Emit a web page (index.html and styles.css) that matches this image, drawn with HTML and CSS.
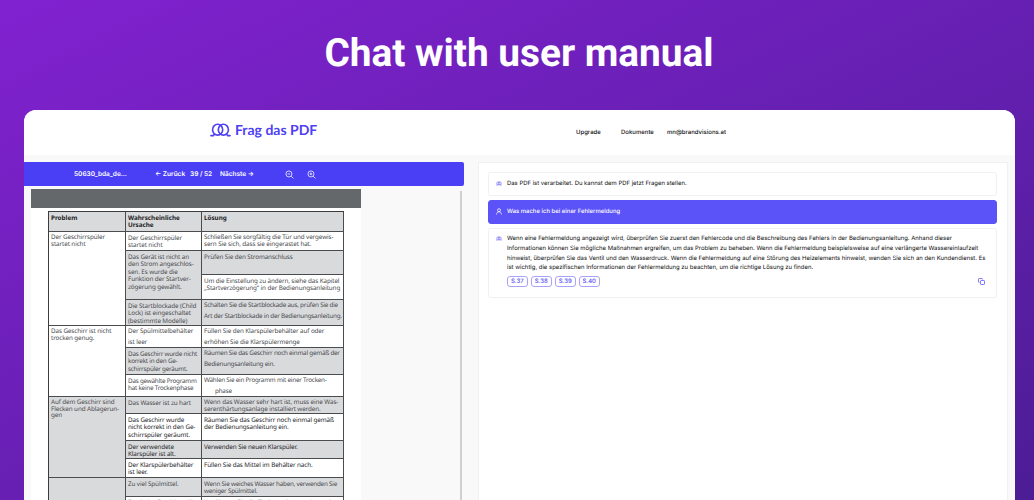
FILE: index.html
```html
<!DOCTYPE html>
<html lang="de">
<head>
    <meta charset="UTF-8">
    <meta name="viewport" content="width=device-width, initial-scale=1.0">
    <title>Frag das PDF</title>
    <link rel="stylesheet" href="styles.css">
</head>
<body>
    <h1>Chat with user manual</h1>

    <div class="window">
        <header class="header">
            <div class="logo">
                <svg class="logo-icon" viewBox="0 0 22 14" fill="none" stroke="currentColor" stroke-width="1.7" stroke-linecap="round">
                    <ellipse cx="8" cy="6.700" rx="5.300" ry="5.700"/>
                    <ellipse cx="14" cy="6.700" rx="5.300" ry="5.700"/>
                    <path d="M1 12.900h2.500l1.200-1.700M21 12.900h-2.500l-1.200-1.700"/>
                </svg>
                <span>Frag das PDF</span>
            </div>
            <nav class="nav">
                <a class="upgrade">Upgrade</a>
                <a class="documents">Dokumente</a>
                <a class="account">mn@brandvisions.at</a>
            </nav>
        </header>

        <main class="main">
            <section class="viewer">
                <div class="toolbar">
                    <span class="file-name">50630_bda_de...</span>
                    <span class="prev">← Zurück</span>
                    <span class="pages">39 / 52</span>
                    <span class="next">Nächste →</span>
                    <svg class="zoom-icon" viewBox="0 0 24 24"><circle cx="10.500" cy="10.500" r="8"/><path d="M16.500 16.500l6 6M7 10.500h7"/></svg>
                    <svg class="zoom-icon" viewBox="0 0 24 24"><circle cx="10.500" cy="10.500" r="8"/><path d="M16.500 16.500l6 6M7 10.500h7M10.500 7v7"/></svg>
                </div>
                <div class="viewer-body">
                    <div class="page">
                        <div class="page-bar"></div>
                        <div class="manual">
                            <div class="cell head">Problem</div>
                            <div class="cell head">Wahrscheinliche<br>Ursache</div>
                            <div class="cell head">Lösung</div>

                            <div class="cell tight rows-4">Der Geschirrspüler<br>startet nicht</div>
                            <div class="cell">Der Geschirrspüler<br>startet nicht</div>
                            <div class="cell tight">Schließen Sie sorgfältig die Tür und vergewis-<br>sern Sie sich, dass sie eingerastet hat.</div>
                            <div class="cell grey rows-2">Das Gerät ist nicht an<br>den Strom angeschlos-<br>sen. Es wurde die<br>Funktion der Startver-<br>zögerung gewählt.</div>
                            <div class="cell grey">Prüfen Sie den Stromanschluss</div>
                            <div class="cell">Um die Einstellung zu ändern, siehe das Kapitel<br>„Startverzögerung“ in der Bedienungsanleitung</div>
                            <div class="cell grey">Die Startblockade (Child<br>Lock) ist eingeschaltet<br>(bestimmte Modelle)</div>
                            <div class="cell grey loose narrow">Schalten Sie die Startblockade aus, prüfen Sie die<br>Art der Startblockade in der Bedienungsanleitung.</div>

                            <div class="cell tight rows-3">Das Geschirr ist nicht<br>trocken genug.</div>
                            <div class="cell loose">Der Spülmittelbehälter<br>ist leer</div>
                            <div class="cell loose">Füllen Sie den Klarspülerbehälter auf oder<br>erhöhen Sie die Klarspülermenge</div>
                            <div class="cell grey narrow">Das Geschirr wurde nicht<br>korrekt in den Ge-<br>schirrspüler geräumt.</div>
                            <div class="cell grey loose narrow">Räumen Sie das Geschirr noch einmal gemäß der<br>Bedienungsanleitung ein.</div>
                            <div class="cell narrow">Das gewählte Programm<br>hat keine Trockenphase</div>
                            <div class="cell loose narrow">Wählen Sie ein Programm mit einer Trocken-<br><span class="indent">phase</span></div>

                            <div class="cell grey tight rows-4">Auf dem Geschirr sind<br>Flecken und Ablagerun-<br>gen</div>
                            <div class="cell grey">Das Wasser ist zu hart</div>
                            <div class="cell grey tight">Wenn das Wasser sehr hart ist, muss eine Was-<br>serenthärtungsanlage installiert werden.</div>
                            <div class="cell dark">Das Geschirr wurde<br>nicht korrekt in den Ge-<br>schirrspüler geräumt.</div>
                            <div class="cell dark">Räumen Sie das Geschirr noch einmal gemäß<br>der Bedienungsanleitung ein.</div>
                            <div class="cell grey dark">Der verwendete<br>Klarspüler ist alt.</div>
                            <div class="cell grey dark">Verwenden Sie neuen Klarspüler.</div>
                            <div class="cell dark">Der Klarspülerbehälter<br>ist leer.</div>
                            <div class="cell dark">Füllen Sie das Mittel im Behälter nach.</div>

                            <div class="cell grey rows-2"></div>
                            <div class="cell grey">Zu viel Spülmittel.</div>
                            <div class="cell grey narrow">Wenn Sie weiches Wasser haben, verwenden Sie<br>weniger Spülmittel.</div>
                            <div class="cell last">Das beim Geschirrspüler</div>
                            <div class="cell last">Verdünnen Sie die Flecken mit etwas Lauge in</div>
                        </div>
                    </div>
                    <div class="scrollbar"></div>
                </div>
            </section>

            <section class="chat">
                <div class="message">
                    <svg class="bot-icon" viewBox="0 0 22 14"><ellipse cx="8" cy="6.700" rx="5.300" ry="5.700"/><ellipse cx="14" cy="6.700" rx="5.300" ry="5.700"/><path d="M1 12.900h4M21 12.900h-4"/></svg>
                    <p>Das PDF ist verarbeitet. Du kannst dem PDF jetzt Fragen stellen.</p>
                </div>
                <div class="message user">
                    <svg class="user-icon" viewBox="0 0 14 16"><circle cx="7" cy="5" r="3.500"/><path d="M1.500 15c0-3.500 2-6.500 5.500-6.500s5.500 3 5.500 6.500"/></svg>
                    <p>Was mache ich bei einer Fehlermeldung</p>
                </div>
                <div class="message answer">
                    <svg class="bot-icon" viewBox="0 0 22 14"><ellipse cx="8" cy="6.700" rx="5.300" ry="5.700"/><ellipse cx="14" cy="6.700" rx="5.300" ry="5.700"/><path d="M1 12.900h4M21 12.900h-4"/></svg>
                    <div class="answer-body">
                        <p>Wenn eine Fehlermeldung angezeigt wird, überprüfen Sie zuerst den Fehlercode und die Beschreibung des Fehlers in der Bedienungsanleitung. Anhand dieser<br>
                        Informationen können Sie mögliche Maßnahmen ergreifen, um das Problem zu beheben. Wenn die Fehlermeldung beispielsweise auf eine verlängerte Wassereinlaufzeit<br>
                        hinweist, überprüfen Sie das Ventil und den Wasserdruck. Wenn die Fehlermeldung auf eine Störung des Heizelements hinweist, wenden Sie sich an den Kundendienst. Es<br>
                        ist wichtig, die spezifischen Informationen der Fehlermeldung zu beachten, um die richtige Lösung zu finden.</p>
                        <div class="sources">
                            <a>S.37</a>
                            <a>S.38</a>
                            <a>S.39</a>
                            <a>S.40</a>
                            <svg class="copy-icon" viewBox="0 0 14 14"><rect x="5" y="5" width="8" height="8" rx="1.500"/><path d="M3 9H2.500A1.500 1.500 0 0 1 1 7.500v-5A1.500 1.500 0 0 1 2.500 1h5A1.500 1.500 0 0 1 9 2.500V3"/></svg>
                        </div>
                    </div>
                </div>
            </section>
        </main>
    </div>
</body>
</html>
```
FILE: styles.css
```css
* {
    box-sizing: border-box;
}

body {
    margin: 0;
    height: 500px;
    overflow: hidden;
    display: flex;
    flex-direction: column;
    background: linear-gradient(to bottom right, #8122d0, #4c1d95);
    font-family: Inter, sans-serif;
    text-rendering: geometricPrecision;
}

h1 {
    margin: 0;
    height: 110px;
    padding: 1px 0 0 4px;
    flex-shrink: 0;
    line-height: 106px;
    text-align: center;
    color: #fff;
    font-family: Roboto, sans-serif;
    font-size: 38.8px;
    font-weight: 700;
}

.window {
    flex: 1;
    min-height: 0;
    margin: 0 19px 0 24px;
    display: flex;
    flex-direction: column;
    background-color: #f9f9fa;
    border-radius: 12px 12px 0 0;
    overflow: hidden;
}

.header {
    height: 45px;
    flex-shrink: 0;
    display: flex;
    background-color: #fff;
}

.logo {
    width: 366px;
    height: 39px;
    padding-left: 186px;
    display: flex;
    align-items: center;
    gap: 4px;
    color: #4f3ff5;
    font-family: Lato, sans-serif;
    font-size: 14px;
    font-weight: 700;
    white-space: nowrap;
}

.logo-icon {
    width: 21px;
    height: 14px;
}

.nav {
    height: 44px;
    margin-left: 186px;
    display: flex;
    align-items: center;
    color: #111;
    font-size: 6px;
    font-weight: 500;
}

.upgrade {
    width: 45px;
}

.documents {
    width: 46px;
}

.main {
    flex: 1;
    min-height: 0;
    padding: 7px 7px 0 0;
    display: flex;
    gap: 14px;
}

.viewer {
    width: 440px;
    flex-shrink: 0;
}

.toolbar {
    height: 24px;
    padding-left: 50px;
    display: flex;
    align-items: center;
    background-color: #4b3ff6;
    border-radius: 0 2px 2px 0;
    color: #fff;
    font-size: 6.5px;
    font-weight: 600;
    white-space: nowrap;
}

.file-name {
    width: 81px;
}

.prev {
    width: 35px;
}

.pages {
    width: 30px;
}

.next {
    width: 65px;
}

.zoom-icon {
    width: 9px;
    height: 9px;
    margin-right: 13px;
    fill: none;
    stroke: #fff;
    stroke-width: 2;
}

.viewer-body {
    display: flex;
    justify-content: space-between;
    padding: 3px 2px 0 7px;
}

.page {
    width: 330px;
    height: 320px;
    background-color: #fff;
}

.page-bar {
    height: 19px;
    background-color: #65686b;
}

/* table of the manual, row heights follow the printed page */
.manual {
    width: 296px;
    margin: 3px 0 0 17px;
    display: grid;
    grid-template-columns: 77px 76px 142px;
    grid-template-rows: 20px 19px 24px 25px 26px 22px 27px 22px 17px 27px 18px 19px 19px 20px;
    border: solid #3b3c3e;
    border-width: 1px 0 0 1px;
}

.cell {
    padding: 1.6px 0 0 2px;
    border: solid #4b4c4e;
    border-width: 0 1px 1px 0;
    color: #4b4c50;
    font-family: "Noto Sans", sans-serif;
    font-size: 6.3px;
    line-height: 7.6px;
    letter-spacing: -0.1px;
    white-space: nowrap;
}

.head {
    background-color: #d9dadc;
    color: #1b1b1d;
    font-weight: 700;
    letter-spacing: 0;
}

.grey {
    background-color: #d9dadc;
}

.dark {
    color: #252629;
}

.tight {
    padding-top: 2.4px;
    line-height: 6.5px;
}

.loose {
    padding-top: 0;
    line-height: 10.7px;
}

.narrow {
    letter-spacing: -0.22px;
}

.last {
    padding-top: 1px;
    color: #a5a6a8;
}

.indent {
    padding-left: 11px;
}

.rows-2 {
    grid-row: span 2;
}

.rows-3 {
    grid-row: span 3;
}

.rows-4 {
    grid-row: span 4;
}

.scrollbar {
    width: 2px;
    height: 320px;
    margin-top: 2px;
    background-color: #cfcfd1;
}

.chat {
    flex: 1;
    min-width: 0;
    padding: 9px 10px 0 9px;
    display: flex;
    flex-direction: column;
    gap: 4px;
    background-color: #fff;
    border: 1px solid #f1f1f3;
    border-bottom: 0;
}

.message {
    height: 24px;
    padding: 6px 8px 0 7px;
    flex-shrink: 0;
    display: flex;
    align-items: flex-start;
    border: 1px solid #f0f0f2;
    border-radius: 3px;
    color: #111;
    font-size: 5.95px;
    line-height: 9.6px;
    white-space: nowrap;
}

.message p {
    margin: 0;
}

.user {
    background-color: #5b52f8;
    border-color: #5b52f8;
    color: #fff;
    font-weight: 500;
}

.answer {
    height: 70px;
    padding-top: 5.4px;
}

.bot-icon,
.user-icon {
    width: 6px;
    height: 5px;
    margin: 2px 5px 0 0;
    flex-shrink: 0;
    fill: none;
    stroke: #5b4ff6;
    stroke-width: 2;
}

.user-icon {
    height: 7px;
    margin-top: 1px;
    stroke: #fff;
    stroke-width: 1.8;
}

.answer-body {
    flex: 1;
    min-width: 0;
}

.sources {
    margin-top: 3.6px;
    display: flex;
    align-items: center;
    gap: 3.5px;
}

.sources a {
    width: 20.5px;
    height: 11px;
    border: 1px solid #a9a2fa;
    border-radius: 3px;
    color: #5b4ff6;
    font-size: 6px;
    font-weight: 500;
    line-height: 9px;
    text-align: center;
}

.copy-icon {
    width: 7px;
    height: 7px;
    margin: 0 3px 0 auto;
    fill: none;
    stroke: #5b4ff6;
    stroke-width: 1.6;
}
```
